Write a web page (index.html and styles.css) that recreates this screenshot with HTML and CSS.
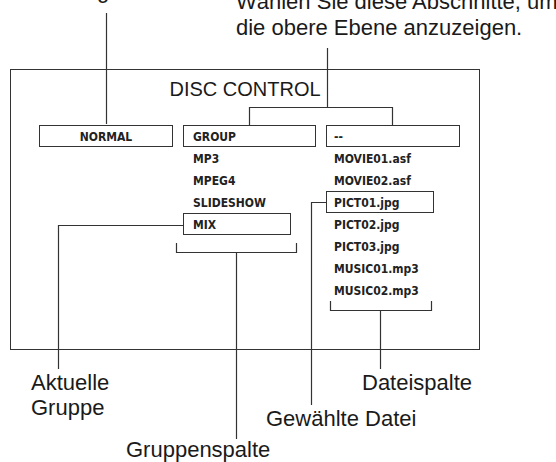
FILE: index.html
```html
<!DOCTYPE html>
<html lang="de">
<head>
    <meta charset="UTF-8">
    <meta name="viewport" content="width=device-width, initial-scale=1.0">
    <title>Disc Control</title>
    <link rel="stylesheet" href="styles.css">
</head>
<body>
    <div class="page">
        <!-- Hinweistexte oben -->
        <p class="note note-top-left">Anzeige</p>
        <p class="note note-top">Wählen Sie diese Abschnitte, um<br>die obere Ebene anzuzeigen.</p>

        <div class="panel">
            <h2 class="panel-title">DISC CONTROL</h2>
            <div class="columns">
                <div class="col">
                    <div class="row boxed center">NORMAL</div>
                </div>
                <div class="col">
                    <div class="row boxed">GROUP</div>
                    <div class="row">MP3</div>
                    <div class="row">MPEG4</div>
                    <div class="row">SLIDESHOW</div>
                    <div class="row boxed short">MIX</div>
                </div>
                <div class="col">
                    <div class="row boxed">--</div>
                    <div class="row">MOVIE01.asf</div>
                    <div class="row">MOVIE02.asf</div>
                    <div class="row boxed short">PICT01.jpg</div>
                    <div class="row">PICT02.jpg</div>
                    <div class="row">PICT03.jpg</div>
                    <div class="row">MUSIC01.mp3</div>
                    <div class="row">MUSIC02.mp3</div>
                </div>
            </div>
        </div>

        <!-- Verbindungslinien -->
        <svg class="callouts" width="556" height="462" viewBox="0 0 556 462">
            <path d="M106.5 13 V124" />
            <path d="M327.5 48 V107.5" />
            <path d="M249.5 125 V107.5 H392.5 V125" />
            <path d="M176.5 243 V252.5 H296.5 V243" />
            <path d="M236.5 252.5 V439" />
            <path d="M183 225.5 H58.5 V369" />
            <path d="M330.5 301 V310.5 H431.5 V301" />
            <path d="M380.5 310.5 V369" />
            <path d="M326 202.5 H311.5 V405" />
        </svg>

        <p class="note label-current">Aktuelle<br>Gruppe</p>
        <p class="note label-groups">Gruppenspalte</p>
        <p class="note label-selected">Gewählte Datei</p>
        <p class="note label-files">Dateispalte</p>
    </div>
</body>
</html>
```

FILE: styles.css
```css
body {
    margin: 0;
    background: #ffffff;
    font-family: "Liberation Sans", Arial, sans-serif;
    color: #1a1a1a;
}

.page {
    position: relative;
    width: 556px;
    height: 462px;
    overflow: hidden;
    padding-top: 69px;
    box-sizing: border-box;
}

.panel {
    margin-left: 10px;
    width: 470px;
    height: 281px;
    border: 1px solid #333333;
    box-sizing: border-box;
    padding: 7px 0 0 28px;
}

.panel-title {
    margin: 0 0 24px -28px;
    font-size: 20px;
    font-weight: normal;
    line-height: 24px;
    text-align: center;
}

.columns {
    display: grid;
    grid-template-columns: 134px 133px 134px;
    column-gap: 10px;
}

.row {
    height: 22px;
    box-sizing: border-box;
    border: 1px solid transparent;
    padding: 1px 0 0 9px;
    font-family: "DejaVu Sans Condensed", "DejaVu Sans", sans-serif;
    font-stretch: condensed;
    font-size: 12px;
    font-weight: bold;
    line-height: 20px;
    color: #222222;
}

.row.boxed {
    border-color: #333333;
}

.row.short {
    width: 108px;
}

.row.center {
    padding-left: 0;
    text-align: center;
}

.col:last-child .row {
    padding-left: 7px;
}

.callouts {
    position: absolute;
    left: 0;
    top: 0;
    pointer-events: none;
}

.callouts path {
    fill: none;
    stroke: #333333;
    stroke-width: 1.2;
}

.note {
    position: absolute;
    margin: 0;
    font-size: 22px;
    line-height: 25px;
    white-space: nowrap;
}

.note-top-left {
    left: 42px;
    top: -22px;
}

.note-top {
    left: 236px;
    top: -11px;
    line-height: 26px;
}

.label-current {
    left: 31px;
    top: 370px;
}

.label-groups {
    left: 126px;
    top: 437px;
}

.label-selected {
    left: 266px;
    top: 406px;
}

.label-files {
    left: 362px;
    top: 370px;
}
```
